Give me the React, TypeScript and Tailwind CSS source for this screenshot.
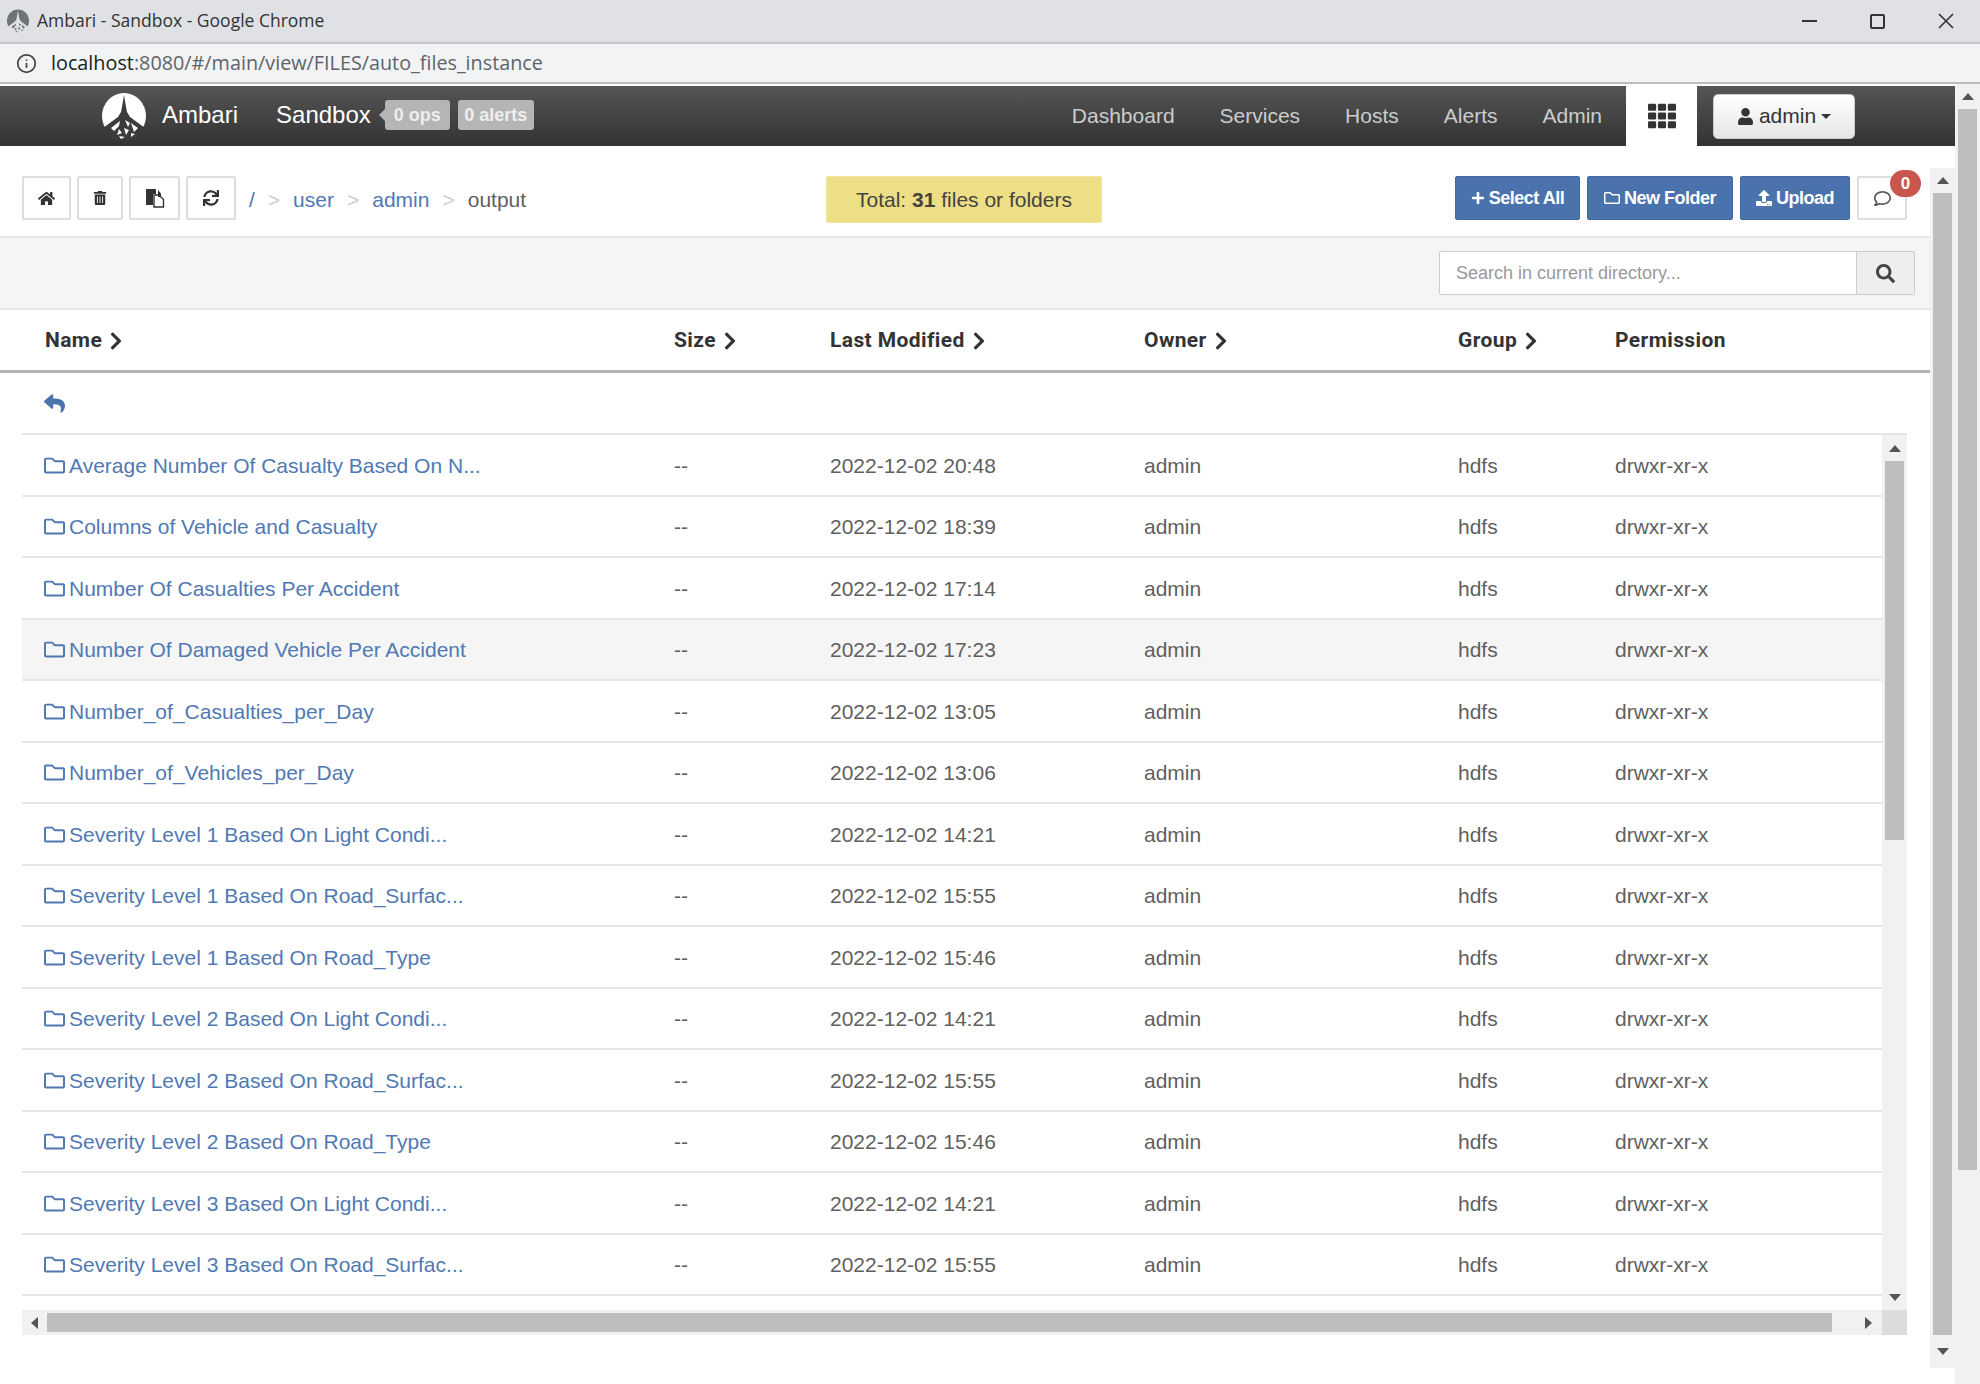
import {
  FaChevronRight,
  FaHome,
  FaPlus,
  FaRegComment,
  FaRegFolder,
  FaReply,
  FaSearch,
  FaSync,
  FaTh,
  FaTrashAlt,
  FaUpload,
  FaUser,
} from "react-icons/fa";
import { Info } from "lucide-react";

const rows = [
  ["Average Number Of Casualty Based On N...", "2022-12-02 20:48"],
  ["Columns of Vehicle and Casualty", "2022-12-02 18:39"],
  ["Number Of Casualties Per Accident", "2022-12-02 17:14"],
  ["Number Of Damaged Vehicle Per Accident", "2022-12-02 17:23"],
  ["Number_of_Casualties_per_Day", "2022-12-02 13:05"],
  ["Number_of_Vehicles_per_Day", "2022-12-02 13:06"],
  ["Severity Level 1 Based On Light Condi...", "2022-12-02 14:21"],
  ["Severity Level 1 Based On Road_Surfac...", "2022-12-02 15:55"],
  ["Severity Level 1 Based On Road_Type", "2022-12-02 15:46"],
  ["Severity Level 2 Based On Light Condi...", "2022-12-02 14:21"],
  ["Severity Level 2 Based On Road_Surfac...", "2022-12-02 15:55"],
  ["Severity Level 2 Based On Road_Type", "2022-12-02 15:46"],
  ["Severity Level 3 Based On Light Condi...", "2022-12-02 14:21"],
  ["Severity Level 3 Based On Road_Surfac...", "2022-12-02 15:55"],
];

const headColumns = "grid grid-cols-[652px_156px_314px_314px_157px_1fr] items-center";
const rowColumns = "grid grid-cols-[630px_156px_314px_314px_157px_1fr] items-center pt-[1px]";

const Logo = ({ size, disc, ink }: { size: number; disc: string; ink: string }) => (
  <svg width={size} height={size} viewBox="0 0 48 48">
    <ellipse cx="24" cy="24" rx="22" ry="23" fill={disc} />
    <path
      d="M24 3 L26 15 L27 20 L30 25 L45 36 A23 23 0 0 1 3 36 L18 25 L21 20 L22 15 Z"
      fill={ink}
    />
    <path
      d="M11 36 L20 29 L19 34 L14 39 Z M25 28 L30 31 L28 35 Z M31 31 L38 36 L34 40 Z M19 37 L22 41 L17 43 Z M24 36 L29 38 L26 43 Z M31 41 L35 42 L31 45 Z M19 44 L25 45 L21 47 Z"
      fill={disc}
    />
  </svg>
);

const CopyIcon = () => (
  <svg width="20" height="20" viewBox="0 0 20 20">
    <path d="M1 1 H11 V6 H8 V17 H1 Z" fill="#333" />
    <path d="M9 7 H14 L18.5 11.5 V19 H9 Z" fill="#fff" stroke="#333" strokeWidth="1.4" />
    <path d="M13 2 L16 5.5 V9 H13 Z" fill="#333" />
  </svg>
);

const ToolButton = ({ width, children }: { width: string; children: React.ReactNode }) => (
  <button className={`${width} h-[44px] flex items-center justify-center border-2 border-[#ddd] bg-white text-[#333] rounded-[2px]`}>
    {children}
  </button>
);

const BlueButton = ({ width, children }: { width: string; children: React.ReactNode }) => (
  <button className={`${width} h-[44px] flex items-center justify-center gap-[4px] rounded-[2px] border border-[#41689f] bg-[#4a73ae] text-[18px] font-bold tracking-[-0.5px] text-white`}>
    {children}
  </button>
);

const Sep = () => <span className="text-[#ccc] mx-[13px]">&gt;</span>;

const HeadCell = ({ label, first }: { label: string; first?: boolean }) => (
  <div className={`${first ? "pl-[45px]" : "pl-[22px]"} pt-[2px] flex items-center gap-[4px] text-[21px] font-bold text-[#333] font-[Roboto,sans-serif] tracking-[0.4px]`}>
    {label}
    {label !== "Permission" && <FaChevronRight className="text-[20px] text-[#333]" />}
  </div>
);

const Arrow = ({ dir }: { dir: "up" | "down" | "left" | "right" }) => {
  const cls = {
    up: "border-x-[6px] border-x-transparent border-b-[7px] border-b-[#555]",
    down: "border-x-[6px] border-x-transparent border-t-[7px] border-t-[#555]",
    left: "border-y-[6px] border-y-transparent border-r-[7px] border-r-[#555]",
    right: "border-y-[6px] border-y-transparent border-l-[7px] border-l-[#555]",
  }[dir];
  return <div className={`w-0 h-0 ${cls}`} />;
};

export default function App() {
  return (
    <div className="w-[1980px] h-[1384px] overflow-hidden flex flex-col bg-white font-['Liberation_Sans',Arial,sans-serif] text-[21px] text-[#5f5f5f]">
      {/* chrome */}
      <div className="h-[44px] shrink-0 flex items-center bg-[#dfe1e5] border-b-2 border-[#c4c6ca] pl-[6px]">
        <Logo size={24} disc="#6f7277" ink="#dfe1e5" />
        <span className="ml-[7px] -mt-[2px] font-['Open_Sans',sans-serif] text-[17.5px] text-[#333]">Ambari - Sandbox - Google Chrome</span>
        <div className="ml-auto flex items-center h-full">
          <div className="w-[15px] h-[2px] bg-[#333] mr-[53px]" />
          <div className="w-[15px] h-[15px] border-2 border-[#333] rounded-[2px] mr-[52px]" />
          <svg width="18" height="16" viewBox="0 0 18 16" className="mr-[25px]">
            <path d="M2 1 L16 15 M16 1 L2 15" stroke="#333" strokeWidth="1.6" />
          </svg>
        </div>
      </div>
      <div className="h-[40px] shrink-0 flex items-center bg-[#f1f3f4] border-b-2 border-[#bcbcbc] pl-[16px]">
        <Info size={21} className="text-[#444]" />
        <span className="ml-[14px] font-['Open_Sans',sans-serif] text-[19.8px] text-[#5f6368]">
          <span className="text-[#202124]">localhost</span>:8080/#/main/view/FILES/auto_files_instance
        </span>
      </div>

      <div className="flex-1 flex min-h-0">
        <div className="w-[1955px] flex flex-col">
          {/* navbar */}
          <div className="h-[60px] shrink-0 flex items-center bg-gradient-to-b from-[#555] to-[#333] mt-[2px]">
            <div className="ml-[100px]">
              <Logo size={48} disc="#ffffff" ink="#3b3b3b" />
            </div>
            <span className="ml-[14px] -mt-[3px] text-[24px] text-white">Ambari</span>
            <span className="ml-[38px] -mt-[3px] text-[24px] text-white">Sandbox</span>
            <span className="relative ml-[14px] -mt-[2px] h-[30px] w-[65px] flex items-center justify-center rounded-[3px] bg-[#b5b5b5] text-[18px] font-bold text-[#eee]">
              <span className="absolute left-[-6px] top-[9px] w-0 h-0 border-y-[6px] border-y-transparent border-r-[6px] border-r-[#b5b5b5]" />
              0 ops
            </span>
            <span className="ml-[8px] -mt-[2px] h-[30px] w-[76px] flex items-center justify-center rounded-[3px] bg-[#b5b5b5] text-[18px] font-bold text-[#eee]">0 alerts</span>
            <div className="ml-auto flex items-center text-[#ccc] gap-[45px]">
              <span>Dashboard</span>
              <span>Services</span>
              <span>Hosts</span>
              <span>Alerts</span>
              <span>Admin</span>
            </div>
            <div className="ml-[24px] w-[71px] h-full bg-white flex items-center justify-center text-[#333]">
              <FaTh className="text-[28px]" />
            </div>
            <button className="ml-[16px] mr-[100px] w-[142px] h-[45px] rounded-[5px] bg-gradient-to-b from-white to-[#e6e6e6] border border-[#ccc] flex items-center justify-center gap-[5px] text-[#333]">
              <FaUser className="text-[17px]" />
              <span>admin</span>
              <div className="w-0 h-0 border-x-[5px] border-x-transparent border-t-[5px] border-t-[#333]" />
            </button>
          </div>

          <div className="flex-1 flex min-h-0">
            <div className="w-[1930px] flex flex-col">
              {/* toolbar */}
              <div className="h-[90px] shrink-0 flex items-start pt-[30px] pl-[22px]">
                <div className="flex gap-[6px]">
                  <ToolButton width="w-[49px]"><FaHome className="text-[17px]" /></ToolButton>
                  <ToolButton width="w-[46px]"><FaTrashAlt className="text-[14px]" /></ToolButton>
                  <ToolButton width="w-[51px]"><CopyIcon /></ToolButton>
                  <ToolButton width="w-[50px]"><FaSync className="text-[16px]" /></ToolButton>
                </div>
                <div className="ml-[13px] mt-[2px] h-[44px] flex items-center w-[577px]">
                  <span className="text-[#5079b4]">/</span>
                  <Sep />
                  <span className="text-[#5079b4]">user</span>
                  <Sep />
                  <span className="text-[#5079b4]">admin</span>
                  <Sep />
                  <span>output</span>
                </div>
                <div className="w-[276px] h-[47px] flex items-center justify-center rounded-[2px] bg-[#ecdf85] border border-[#efe59f] text-[#444]">
                  Total:&nbsp;<b>31</b>&nbsp;files or folders
                </div>
                <div className="ml-[353px] flex gap-[7px]">
                  <BlueButton width="w-[125px]"><FaPlus className="text-[14px]" />Select All</BlueButton>
                  <BlueButton width="w-[146px]"><FaRegFolder className="text-[16px]" />New Folder</BlueButton>
                  <BlueButton width="w-[110px]"><FaUpload className="text-[16px]" />Upload</BlueButton>
                  <div className="relative">
                    <ToolButton width="w-[50px]"><FaRegComment className="text-[17px] text-[#555]" /></ToolButton>
                    <span className="absolute left-[33px] top-[-6px] w-[31px] h-[27px] rounded-full bg-[#c9564e] flex items-center justify-center text-[17px] font-bold text-white">0</span>
                  </div>
                </div>
              </div>

              {/* search bar */}
              <div className="h-[74px] shrink-0 flex items-center justify-end pr-[15px] bg-[#f5f5f5] border-y-2 border-[#e8e8e8]">
                <div className="flex h-[44px]">
                  <div className="w-[418px] flex items-center pl-[16px] bg-white border border-[#ccc] rounded-l-[2px] text-[18px] text-[#999]">
                    Search in current directory...
                  </div>
                  <div className="w-[58px] flex items-center justify-center bg-[#eee] border border-l-0 border-[#ccc] rounded-r-[2px] text-[#444]">
                    <FaSearch className="text-[19px]" />
                  </div>
                </div>
              </div>

              {/* table head */}
              <div className={`${headColumns} h-[63px] shrink-0 border-b-[3px] border-[#b4b4b4]`}>
                <HeadCell label="Name" first />
                <HeadCell label="Size" />
                <HeadCell label="Last Modified" />
                <HeadCell label="Owner" />
                <HeadCell label="Group" />
                <HeadCell label="Permission" />
              </div>

              <div className="ml-[22px] w-[1885px] h-[62px] shrink-0 flex items-center pl-[22px] border-b-2 border-[#e5e5e5] text-[#4a73ae]">
                <FaReply className="text-[21px]" />
              </div>

              {/* rows */}
              <div className="ml-[22px] w-[1885px] flex">
                <div className="w-[1860px]">
                  {rows.map(([name, date], i) => (
                    <div
                      key={i}
                      className={`${rowColumns} h-[61.5px] border-b-2 border-[#e5e5e5] ${i === 3 ? "bg-[#f5f5f5]" : ""}`}
                    >
                      <div className="pl-[22px] flex items-center gap-[4px] text-[#5079b4]">
                        <FaRegFolder className="text-[21px] shrink-0" />
                        <span className="whitespace-nowrap">{name}</span>
                      </div>
                      <div className="pl-[22px]">--</div>
                      <div className="pl-[22px]">{date}</div>
                      <div className="pl-[22px]">admin</div>
                      <div className="pl-[22px]">hdfs</div>
                      <div className="pl-[22px]">drwxr-xr-x</div>
                    </div>
                  ))}
                </div>
                <div className="w-[25px] h-[875px] bg-[#f1f1f1] flex flex-col items-center">
                  <div className="h-[26px] flex items-center"><Arrow dir="up" /></div>
                  <div className="w-[19px] h-[379px] bg-[#bebebe]" />
                  <div className="mt-auto h-[26px] flex items-center"><Arrow dir="down" /></div>
                </div>
              </div>

              {/* horizontal scrollbar */}
              <div className="ml-[22px] w-[1885px] h-[25px] flex bg-[#f1f1f1]">
                <div className="w-[25px] flex items-center justify-center"><Arrow dir="left" /></div>
                <div className="w-[1785px] h-[19px] mt-[3px] bg-[#bebebe]" />
                <div className="w-[50px] flex items-center justify-end pr-[10px]"><Arrow dir="right" /></div>
                <div className="w-[25px] bg-[#dcdcdc]" />
              </div>
            </div>

            {/* page scrollbar */}
            <div className="mt-[22px] mb-[16px] w-[25px] bg-[#f1f1f1] flex flex-col items-center">
              <div className="h-[25px] flex items-center"><Arrow dir="up" /></div>
              <div className="w-[19px] h-[1142px] bg-[#bebebe]" />
              <div className="mt-auto h-[33px] flex items-center"><Arrow dir="down" /></div>
            </div>
          </div>
        </div>

        {/* window scrollbar */}
        <div className="w-[25px] bg-[#f1f1f1] flex flex-col items-center">
          <div className="h-[25px] flex items-center"><Arrow dir="up" /></div>
          <div className="w-[19px] h-[1061px] bg-[#bebebe]" />
        </div>
      </div>
    </div>
  );
}
